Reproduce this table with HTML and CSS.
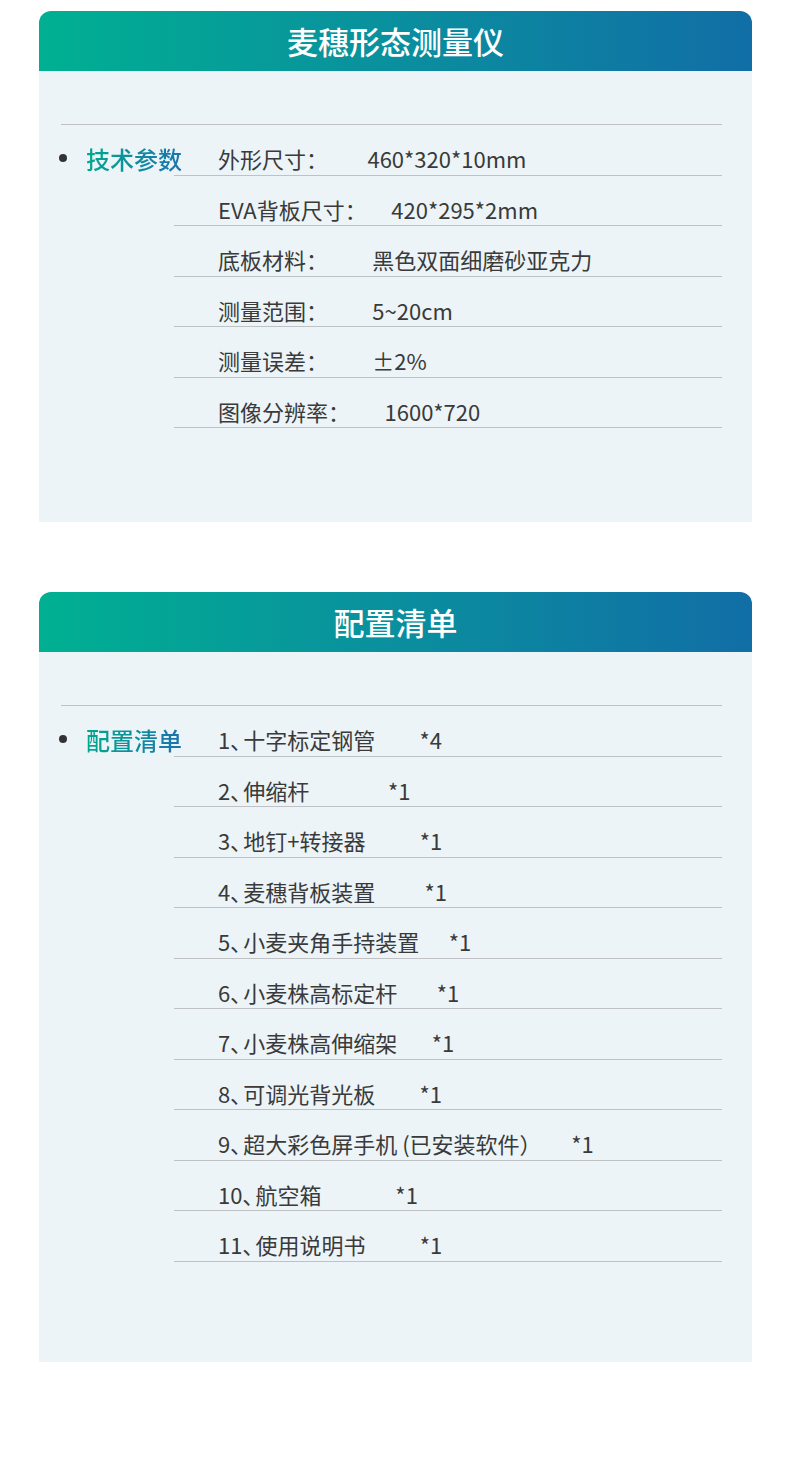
FILE: index.html
```html
<!DOCTYPE html>
<html>
    <head>
        <meta charset="UTF-8">
        <meta name="viewport" content="width=device-width, initial-scale=1.0">
        <title>麦穗形态测量仪</title>
        <link rel="stylesheet" href="styles.css">
    </head>

    <body>
        <div class="card">
            <div class="card-head">麦穗形态测量仪</div>
            <div class="card-body">
                <div class="spec">
                    <div class="spec-label"><span class="dot"></span><span class="grad">技术参数</span></div>
                    <ul class="spec-rows">
                        <li>外形尺寸：&nbsp;&nbsp;&nbsp;&nbsp;&nbsp;&nbsp;&nbsp;&nbsp;460*320*10mm</li>
                        <li>EVA背板尺寸：&nbsp;&nbsp;&nbsp;&nbsp;&nbsp;420*295*2mm</li>
                        <li>底板材料：&nbsp;&nbsp;&nbsp;&nbsp;&nbsp;&nbsp;&nbsp;&nbsp;&nbsp;黑色双面细磨砂亚克力</li>
                        <li>测量范围：&nbsp;&nbsp;&nbsp;&nbsp;&nbsp;&nbsp;&nbsp;&nbsp;&nbsp;5~20cm</li>
                        <li>测量误差：&nbsp;&nbsp;&nbsp;&nbsp;&nbsp;&nbsp;&nbsp;&nbsp;&nbsp;±2%</li>
                        <li>图像分辨率：&nbsp;&nbsp;&nbsp;&nbsp;&nbsp;&nbsp;&nbsp;1600*720</li>
                    </ul>
                </div>
            </div>
        </div>

        <div class="card">
            <div class="card-head">配置清单</div>
            <div class="card-body card-body-tall">
                <div class="spec">
                    <div class="spec-label"><span class="dot"></span><span class="grad">配置清单</span></div>
                    <ul class="spec-rows">
                        <li>1<span class="pause">、</span>十字标定钢管&nbsp;&nbsp;&nbsp;&nbsp;&nbsp;&nbsp;&nbsp;&nbsp;&nbsp;*4</li>
                        <li>2<span class="pause">、</span>伸缩杆&nbsp;&nbsp;&nbsp;&nbsp;&nbsp;&nbsp;&nbsp;&nbsp;&nbsp;&nbsp;&nbsp;&nbsp;&nbsp;&nbsp;&nbsp;&nbsp;*1</li>
                        <li>3<span class="pause">、</span>地钉+转接器&nbsp;&nbsp;&nbsp;&nbsp;&nbsp;&nbsp;&nbsp;&nbsp;&nbsp;&nbsp;&nbsp;*1</li>
                        <li>4<span class="pause">、</span>麦穗背板装置&nbsp;&nbsp;&nbsp;&nbsp;&nbsp;&nbsp;&nbsp;&nbsp;&nbsp;&nbsp;*1</li>
                        <li>5<span class="pause">、</span>小麦夹角手持装置&nbsp;&nbsp;&nbsp;&nbsp;&nbsp;&nbsp;*1</li>
                        <li>6<span class="pause">、</span>小麦株高标定杆&nbsp;&nbsp;&nbsp;&nbsp;&nbsp;&nbsp;&nbsp;&nbsp;*1</li>
                        <li>7<span class="pause">、</span>小麦株高伸缩架&nbsp;&nbsp;&nbsp;&nbsp;&nbsp;&nbsp;&nbsp;*1</li>
                        <li>8<span class="pause">、</span>可调光背光板&nbsp;&nbsp;&nbsp;&nbsp;&nbsp;&nbsp;&nbsp;&nbsp;&nbsp;*1</li>
                        <li>9<span class="pause">、</span>超大彩色屏手机 (已安装软件）&nbsp;&nbsp;&nbsp;&nbsp;&nbsp;&nbsp;*1</li>
                        <li>10<span class="pause">、</span>航空箱&nbsp;&nbsp;&nbsp;&nbsp;&nbsp;&nbsp;&nbsp;&nbsp;&nbsp;&nbsp;&nbsp;&nbsp;&nbsp;&nbsp;&nbsp;*1</li>
                        <li>11<span class="pause">、</span>使用说明书&nbsp;&nbsp;&nbsp;&nbsp;&nbsp;&nbsp;&nbsp;&nbsp;&nbsp;&nbsp;&nbsp;*1</li>
                    </ul>
                </div>
            </div>
        </div>
    </body>
</html>
```

FILE: styles.css
```css
body {
    font-family: "Noto Sans CJK SC", "Noto Sans", sans-serif;
    margin: 0;
    padding: 11px 38px 0 39px;
    background-color: #fff;
    color: #3a3a3a;
}
.card {
    margin-bottom: 70px;
}
.card-head {
    height: 60px;
    line-height: 59px;
    text-align: center;
    color: #fff;
    font-size: 31px;
    font-weight: 500;
    border-radius: 12px 12px 0 0;
    background: linear-gradient(to right, #00b092, #0a8f9e 50%, #116ea6);
}
.card-body {
    background-color: #ecf4f8;
    padding: 53px 30px 94px 22px;
}
.card-body-tall {
    padding-bottom: 100px;
}
.spec {
    display: flex;
    border-top: 1px solid #bfc1c4;
}
.spec-label {
    width: 113px;
    flex-shrink: 0;
    display: flex;
    align-items: center;
    height: 30px;
    margin-top: 18px;
    white-space: nowrap;
    font-size: 24px;
    font-weight: 500;
}
.dot {
    flex-shrink: 0;
    width: 8px;
    height: 8px;
    border-radius: 50%;
    background-color: #333;
    margin-left: -2px;
    margin-right: 19px;
}
.grad {
    flex-shrink: 0;
    background: linear-gradient(to right, #00a98c, #1b72ae);
    -webkit-background-clip: text;
    background-clip: text;
    color: transparent;
}
.spec-rows {
    flex: 1;
    list-style: none;
    margin: 0;
    padding: 0;
}
.spec-rows li {
    font-size: 22px;
    line-height: 31.5px;
    padding: 18px 0 0 44px;
    border-bottom: 1px solid #bfc1c4;
    white-space: nowrap;
}
.pause {
    font-feature-settings: "palt";
    margin-right: 2px;
}
```
